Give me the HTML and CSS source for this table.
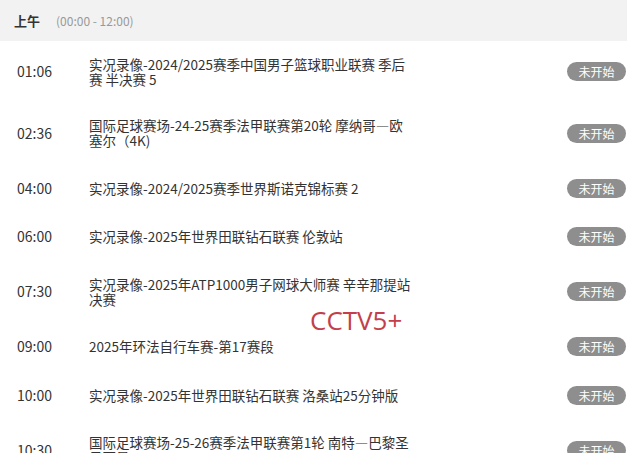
FILE: index.html
```html
<!DOCTYPE html>
<html lang="zh-CN">
<head>
<meta charset="utf-8">
<link rel="stylesheet" href="styles.css">
</head>
<body>
<div class="schedule">
  <div class="period">
    <span class="period-name">上午</span>
    <span class="period-range">(00:00 - 12:00)</span>
  </div>
  <ul class="list">
    <li class="row"><span class="time">01:06</span><span class="title">实况录像-2024/2025赛季中国男子篮球职业联赛 季后赛 半决赛 5</span><span class="badge">未开始</span></li>
    <li class="row"><span class="time">02:36</span><span class="title">国际足球赛场-24-25赛季法甲联赛第20轮 摩纳哥—欧塞尔（4K)</span><span class="badge">未开始</span></li>
    <li class="row"><span class="time">04:00</span><span class="title">实况录像-2024/2025赛季世界斯诺克锦标赛 2</span><span class="badge">未开始</span></li>
    <li class="row"><span class="time">06:00</span><span class="title">实况录像-2025年世界田联钻石联赛 伦敦站</span><span class="badge">未开始</span></li>
    <li class="row"><span class="time">07:30</span><span class="title">实况录像-2025年ATP1000男子网球大师赛 辛辛那提站决赛</span><span class="badge">未开始</span></li>
    <li class="row"><span class="time">09:00</span><span class="title">2025年环法自行车赛-第17赛段</span><span class="badge">未开始</span></li>
    <li class="row"><span class="time">10:00</span><span class="title">实况录像-2025年世界田联钻石联赛 洛桑站25分钟版</span><span class="badge">未开始</span></li>
    <li class="row"><span class="time">10:30</span><span class="title">国际足球赛场-25-26赛季法甲联赛第1轮 南特—巴黎圣日耳曼</span><span class="badge">未开始</span></li>
  </ul>
  <div class="watermark">CCTV5+</div>
</div>
</body>
</html>
```
FILE: styles.css
```css
html, body {
  margin: 0;
  padding: 0;
  background: #fff;
}
body {
  font-family: "Noto Sans CJK SC", "Noto Sans", sans-serif;
  color: #333;
  overflow: hidden;
}
.schedule {
  position: relative;
  width: 627px;
}
.period {
  height: 41px;
  background: #f2f2f2;
  display: flex;
  align-items: center;
  padding-left: 14px;
  gap: 16px;
}
.period-name {
  font-size: 13px;
  font-weight: bold;
  color: #333;
}
.period-range {
  font-size: 12px;
  color: #999;
}
.list {
  list-style: none;
  margin: 0;
  padding: 0;
}
.row {
  display: grid;
  grid-template-columns: 72px 326px 1fr 59px;
  align-items: center;
  padding: 15.5px 1px 16px 17px;
  min-height: 17px;
}
.time {
  font-size: 14px;
  line-height: 17px;
  color: #333;
}
.title {
  font-size: 13.5px;
  line-height: 15px;
  color: #333;
}
.badge {
  grid-column: 4;
  height: 19px;
  margin: -1px 0;
  border-radius: 10px;
  background: #8e8e8e;
  color: #fff;
  font-size: 12px;
  line-height: 19px;
  text-align: center;
}
.watermark {
  position: absolute;
  left: 310px;
  top: 302px;
  font-family: "Open Sans", "Noto Sans", sans-serif;
  font-size: 26px;
  color: #c43e4c;
}
```
